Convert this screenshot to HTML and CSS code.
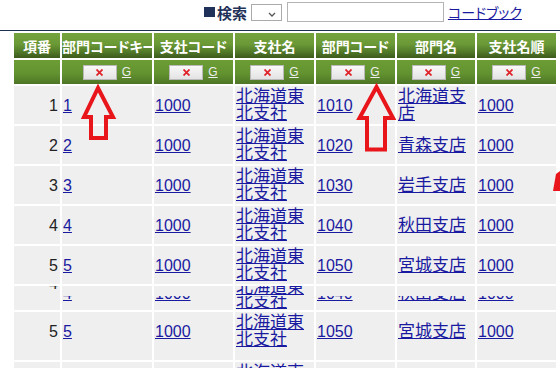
FILE: index.html
```html
<!DOCTYPE html>
<html lang="ja">
<head>
    <meta charset="UTF-8">
    <title>部門コード一覧</title>
    <link rel="stylesheet" href="styles.css">
</head>
<body>
    <div class="toolbar">
        <span class="search-label"><span class="mark"></span>検索</span>
        <span class="select-wrap">
            <select class="field-select"><option></option></select>
            <svg class="chevron" width="8" height="5" viewBox="0 0 8 5"><path d="M1 1 L4 4 L7 1" fill="none" stroke="#555" stroke-width="1.3"/></svg>
        </span>
        <input type="text" class="search-box">
        <a href="#" class="codebook">コードブック</a>
    </div>

    <table class="list">
        <colgroup>
            <col class="c-no"><col class="c-key"><col class="c-mid"><col class="c-mid">
            <col class="c-mid"><col class="c-name"><col class="c-mid">
        </colgroup>
        <thead>
            <tr class="head">
                <th>項番</th><th>部門コードキー</th><th>支社コード</th><th>支社名</th>
                <th>部門コード</th><th>部門名</th><th>支社名順</th>
            </tr>
            <tr class="filters">
                <th></th>
                <th><div class="filter"><button class="clear"><svg width="7" height="7" viewBox="0 0 7 7"><path d="M0.5 0.5 L6.5 6.5 M6.5 0.5 L0.5 6.5"/></svg></button><a href="#">G</a></div></th>
                <th><div class="filter"><button class="clear"><svg width="7" height="7" viewBox="0 0 7 7"><path d="M0.5 0.5 L6.5 6.5 M6.5 0.5 L0.5 6.5"/></svg></button><a href="#">G</a></div></th>
                <th><div class="filter"><button class="clear"><svg width="7" height="7" viewBox="0 0 7 7"><path d="M0.5 0.5 L6.5 6.5 M6.5 0.5 L0.5 6.5"/></svg></button><a href="#">G</a></div></th>
                <th><div class="filter"><button class="clear"><svg width="7" height="7" viewBox="0 0 7 7"><path d="M0.5 0.5 L6.5 6.5 M6.5 0.5 L0.5 6.5"/></svg></button><a href="#">G</a></div></th>
                <th><div class="filter"><button class="clear"><svg width="7" height="7" viewBox="0 0 7 7"><path d="M0.5 0.5 L6.5 6.5 M6.5 0.5 L0.5 6.5"/></svg></button><a href="#">G</a></div></th>
                <th><div class="filter"><button class="clear"><svg width="7" height="7" viewBox="0 0 7 7"><path d="M0.5 0.5 L6.5 6.5 M6.5 0.5 L0.5 6.5"/></svg></button><a href="#">G</a></div></th>
            </tr>
        </thead>
        <tbody>
            <tr>
                <td class="no">1</td><td><a href="#">1</a></td><td><a href="#">1000</a></td>
                <td class="jp"><a href="#">北海道東北支社</a></td><td><a href="#">1010</a></td>
                <td class="jp"><a href="#">北海道支店</a></td><td><a href="#">1000</a></td>
            </tr>
            <tr>
                <td class="no">2</td><td><a href="#">2</a></td><td><a href="#">1000</a></td>
                <td class="jp"><a href="#">北海道東北支社</a></td><td><a href="#">1020</a></td>
                <td class="jp"><a href="#">青森支店</a></td><td><a href="#">1000</a></td>
            </tr>
            <tr>
                <td class="no">3</td><td><a href="#">3</a></td><td><a href="#">1000</a></td>
                <td class="jp"><a href="#">北海道東北支社</a></td><td><a href="#">1030</a></td>
                <td class="jp"><a href="#">岩手支店</a></td><td><a href="#">1000</a></td>
            </tr>
            <tr>
                <td class="no">4</td><td><a href="#">4</a></td><td><a href="#">1000</a></td>
                <td class="jp"><a href="#">北海道東北支社</a></td><td><a href="#">1040</a></td>
                <td class="jp"><a href="#">秋田支店</a></td><td><a href="#">1000</a></td>
            </tr>
            <tr>
                <td class="no">5</td><td><a href="#">5</a></td><td><a href="#">1000</a></td>
                <td class="jp"><a href="#">北海道東北支社</a></td><td><a href="#">1050</a></td>
                <td class="jp"><a href="#">宮城支店</a></td><td><a href="#">1000</a></td>
            </tr>
            <!-- half-drawn row left over from scrolling -->
            <tr class="torn">
                <td class="no"><div class="clip">4</div></td>
                <td><div class="clip"><a href="#">4</a></div></td>
                <td><div class="clip"><a href="#">1000</a></div></td>
                <td class="jp split">
                    <div class="clip top"><a href="#">北海道東</a></div>
                    <div class="clip low"><a href="#">北支社</a></div>
                </td>
                <td><div class="clip"><a href="#">1040</a></div></td>
                <td class="jp"><div class="clip"><a href="#">秋田支店</a></div></td>
                <td><div class="clip"><a href="#">1000</a></div></td>
            </tr>
            <tr class="tall">
                <td class="no">5</td><td><a href="#">5</a></td><td><a href="#">1000</a></td>
                <td class="jp"><a href="#">北海道東北支社</a></td><td><a href="#">1050</a></td>
                <td class="jp"><a href="#">宮城支店</a></td><td><a href="#">1000</a></td>
            </tr>
            <tr>
                <td class="no">6</td><td><a href="#">6</a></td><td><a href="#">1000</a></td>
                <td class="jp"><a href="#">北海道東北支社</a></td><td><a href="#">1060</a></td>
                <td class="jp"><a href="#">山形支店</a></td><td><a href="#">1000</a></td>
            </tr>
        </tbody>
    </table>

    <svg class="marks" width="560" height="368" viewBox="0 0 560 368">
        <path d="M98 88 L113 117 L106 117 L106 138 L91 138 L91 117 L84 117 Z"/>
        <path d="M376.5 87 L393 118 L385 118 L385 149.5 L367 149.5 L367 118 L359.5 118 Z"/>
        <polygon class="fill" points="556,174 560,171 560,191 553,191"/>
    </svg>
</body>
</html>
```

FILE: styles.css
```css
body {
    margin: 0;
    background: #fff;
    font-family: "Liberation Sans", "Noto Sans CJK JP", sans-serif;
    overflow: hidden;
    position: relative;
}
.toolbar {
    display: flex;
    justify-content: flex-end;
    align-items: center;
    height: 24px;
    padding: 0 38px 6px 0;
    border-bottom: 1px solid #1f3150;
}
.search-label {
    display: flex;
    align-items: center;
    gap: 2px;
    margin-right: 4px;
    font: bold 15px "Noto Sans CJK JP", sans-serif;
    color: #1f3158;
}
.mark {
    width: 11px;
    height: 10px;
    background: #1f3158;
}
.select-wrap {
    position: relative;
    display: flex;
    margin-right: 5px;
}
.field-select {
    appearance: none;
    width: 31px;
    height: 17px;
    margin: 0;
    border: 1px solid #ababab;
    border-radius: 0;
    background: #fff;
}
.chevron {
    position: absolute;
    left: 17px;
    top: 8px;
}
.search-box {
    width: 157px;
    height: 20px;
    box-sizing: border-box;
    margin: 0 4px 0 0;
    border: 1px solid #b4b4b4;
    padding: 0 2px;
}
.codebook {
    font: 14px "Noto Sans CJK JP", sans-serif;
    font-feature-settings: "palt";
    color: #1a1aa0;
}
.list {
    table-layout: fixed;
    width: 546px;
    margin-left: 12px;
    border-collapse: separate;
    border-spacing: 2px;
}
.c-no { width: 46px; }
.c-key { width: 90px; }
.c-mid { width: 79px; }
.c-name { width: 78px; }
.head th {
    height: 25px;
    padding: 0;
    color: #fff;
    font: bold 14px "Noto Sans CJK JP", sans-serif;
    font-feature-settings: "palt";
    white-space: nowrap;
    overflow: hidden;
    text-align: center;
    background: linear-gradient(to bottom, #74a33e 0%, #6a9936 45%, #557d2a 72%, #3c5a1d 100%);
}
.filters th {
    height: 24px;
    padding: 0;
    background: linear-gradient(to bottom, #6c9d35 0%, #639330 55%, #4e7526 100%);
}
.filter {
    display: flex;
    justify-content: center;
    align-items: center;
    gap: 5px;
}
.clear {
    display: flex;
    justify-content: center;
    align-items: center;
    width: 34px;
    height: 15px;
    padding: 0;
    border: 1px solid #b9b9b9;
    background: linear-gradient(to bottom, #f8f8f8, #e3e3e3);
}
.clear path {
    stroke: #e0242b;
    stroke-width: 1.8;
}
.filter a {
    font: 12px "Liberation Sans", sans-serif;
    color: #eee;
}
tbody td {
    height: 38px;
    padding: 0 0 0 1px;
    background: #efefef;
    font-size: 16px;
    line-height: 17px;
    vertical-align: middle;
}
tbody a {
    color: #1a1aa0;
}
tbody td.jp {
    font-size: 17px;
}
tbody td.no {
    padding: 0 2px 0 0;
    text-align: right;
    color: #222;
}
.torn td {
    height: 14px;
    padding-top: 10px;
    vertical-align: top;
}
.clip {
    display: flex;
    align-items: flex-end;
    height: 6px;
    overflow: hidden;
}
.torn td.no .clip {
    justify-content: flex-end;
}
.torn td.split {
    height: 24px;
    padding-top: 0;
}
.clip.top {
    height: 10px;
}
.clip.low {
    height: 14px;
}
.tall td {
    height: 38px;
    padding-bottom: 10px;
}
.tall td.no {
    padding-bottom: 10px;
}
.marks {
    position: absolute;
    left: 0;
    top: 0;
    pointer-events: none;
}
.marks path {
    fill: none;
    stroke: #e8151b;
    stroke-width: 4;
}
.marks .fill {
    fill: #e8151b;
}
```
